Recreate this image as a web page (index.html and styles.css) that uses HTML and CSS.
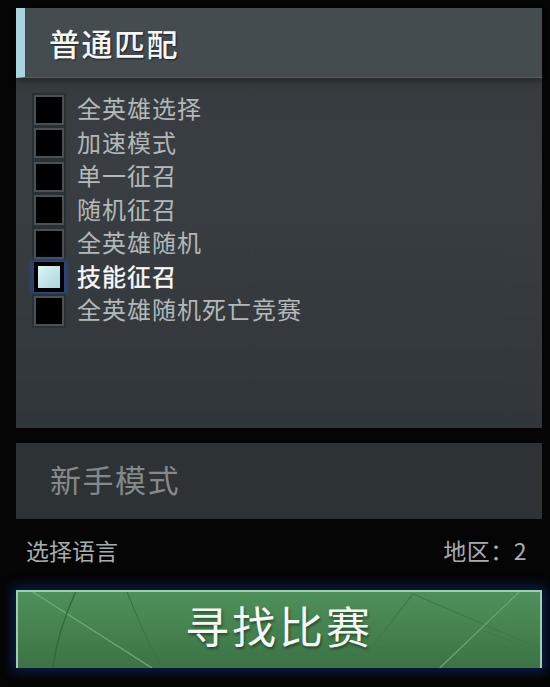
FILE: index.html
```html
<!DOCTYPE html>
<html lang="zh">
<head>
<meta charset="utf-8">
<link rel="stylesheet" href="styles.css">
</head>
<body>
<div class="page">
  <section class="panel">
    <header class="panel-head"><h1 class="title">普通匹配</h1></header>
    <ul class="modes">
      <li class="mode"><span class="box"><span class="check"></span></span><span class="label">全英雄选择</span></li>
      <li class="mode"><span class="box"><span class="check"></span></span><span class="label">加速模式</span></li>
      <li class="mode"><span class="box"><span class="check"></span></span><span class="label">单一征召</span></li>
      <li class="mode"><span class="box"><span class="check"></span></span><span class="label">随机征召</span></li>
      <li class="mode"><span class="box"><span class="check"></span></span><span class="label">全英雄随机</span></li>
      <li class="mode selected"><span class="box"><span class="check"></span></span><span class="label">技能征召</span></li>
      <li class="mode"><span class="box"><span class="check"></span></span><span class="label">全英雄随机死亡竞赛</span></li>
    </ul>
  </section>
  <section class="novice">新手模式</section>
  <div class="footer-row">
    <span class="lang">选择语言</span>
    <span class="region">地区：2</span>
  </div>
  <button class="find">
    <svg class="deco" viewBox="0 0 526 78" preserveAspectRatio="none">
      <path d="M15 0 L135 78" stroke="#6fae7c" stroke-width="1.2" fill="none"/>
      <path d="M58 0 Q40 40 35 78" stroke="#2f6a3a" stroke-width="1.4" fill="none"/>
      <path d="M110 0 Q125 40 145 78" stroke="#3a7545" stroke-width="1.2" fill="none"/>
      <path d="M235 78 L250 60" stroke="#3a7545" stroke-width="1" fill="none"/>
      <path d="M398 2 L340 78" stroke="#3e7a49" stroke-width="1.2" fill="none"/>
      <path d="M398 2 L526 58" stroke="#3e7a49" stroke-width="1.2" fill="none"/>
      <path d="M505 0 L425 78" stroke="#68a877" stroke-width="1.2" fill="none"/>
      <path d="M470 40 L526 62" stroke="#3e7a49" stroke-width="1" fill="none"/>
    </svg>
    <span class="find-text">寻找比赛</span>
  </button>
</div>
</body>
</html>
```

FILE: styles.css
```css
* { box-sizing: border-box; }
html, body {
  margin: 0;
  padding: 0;
  background: #050505;
  font-family: "Noto Sans CJK SC", "Noto Sans", sans-serif;
}
.page {
  width: 550px;
  height: 687px;
  padding: 8px 8px 0 16px;
  display: flex;
  flex-direction: column;
}
.panel {
  width: 526px;
  height: 420px;
  background: linear-gradient(180deg, #33393c 0%, #383e41 40%, #30363a 100%);
  display: flex;
  flex-direction: column;
}
.panel-head {
  height: 70px;
  background: #454c50;
  border-left: 9px solid #a9d6de;
  border-bottom: 1px solid #565d60;
  box-shadow: 0 3px 6px rgba(0,0,0,0.35);
  display: flex;
  align-items: center;
  padding-left: 24px;
}
.title {
  margin: 0;
  font-size: 31px;
  font-weight: 500;
  color: #f4f6f6;
  letter-spacing: 1.5px;
  line-height: 1;
  text-shadow: 1px 1px 2px rgba(0,0,0,0.6);
}
.modes {
  list-style: none;
  margin: 0;
  padding: 15px 0 0 16px;
  display: flex;
  flex-direction: column;
}
.mode {
  height: 33.5px;
  display: flex;
  align-items: center;
  gap: 11px;
}
.box {
  width: 34px;
  height: 34px;
  background: #2b3033;
  display: flex;
  align-items: center;
  justify-content: center;
}
.check {
  width: 30px;
  height: 30px;
  background: #000;
  border: 2px solid #4a5154;
}
.label {
  font-size: 24px;
  color: #b3b8b9;
  letter-spacing: 1px;
  line-height: 1;
  margin-top: -3px;
}
.selected .check {
  border: 4px solid #000;
  background: linear-gradient(135deg, #dff5f5, #a9d6da);
  box-shadow: 0 0 5px 2px #2e4f9a;
}
.selected .label {
  color: #fafafa;
  -webkit-text-stroke: 0.4px #fafafa;
}
.novice {
  margin-top: 15px;
  width: 526px;
  height: 76px;
  background: #2d3235;
  color: #85898a;
  font-size: 31px;
  line-height: 1;
  letter-spacing: 1.5px;
  display: flex;
  align-items: center;
  padding: 0 0 5px 34px;
}
.footer-row {
  width: 526px;
  height: 71px;
  display: flex;
  justify-content: space-between;
  align-items: center;
  padding: 0 15px 8px 10px;
  font-size: 23px;
  line-height: 1;
  color: #a6adad;
}
.region {
  letter-spacing: 0.5px;
}
.find {
  position: relative;
  width: 526px;
  height: 78px;
  padding: 0 0 11px 0;
  border: 2px solid #9fd0ad;
  border-bottom: none;
  background: linear-gradient(180deg, #4f905a 0%, #447f4d 60%, #3c7345 100%);
  box-shadow: 0 0 10px 4px #0a1c4a;
  display: flex;
  align-items: center;
  justify-content: center;
  overflow: hidden;
  font-family: inherit;
}
.deco {
  position: absolute;
  left: 0;
  top: 0;
  width: 100%;
  height: 100%;
}
.find-text {
  position: relative;
  font-size: 44px;
  line-height: 1;
  color: #f4f8f4;
  letter-spacing: 3px;
  text-shadow: 1px 2px 3px rgba(0,0,0,0.45);
}
```
